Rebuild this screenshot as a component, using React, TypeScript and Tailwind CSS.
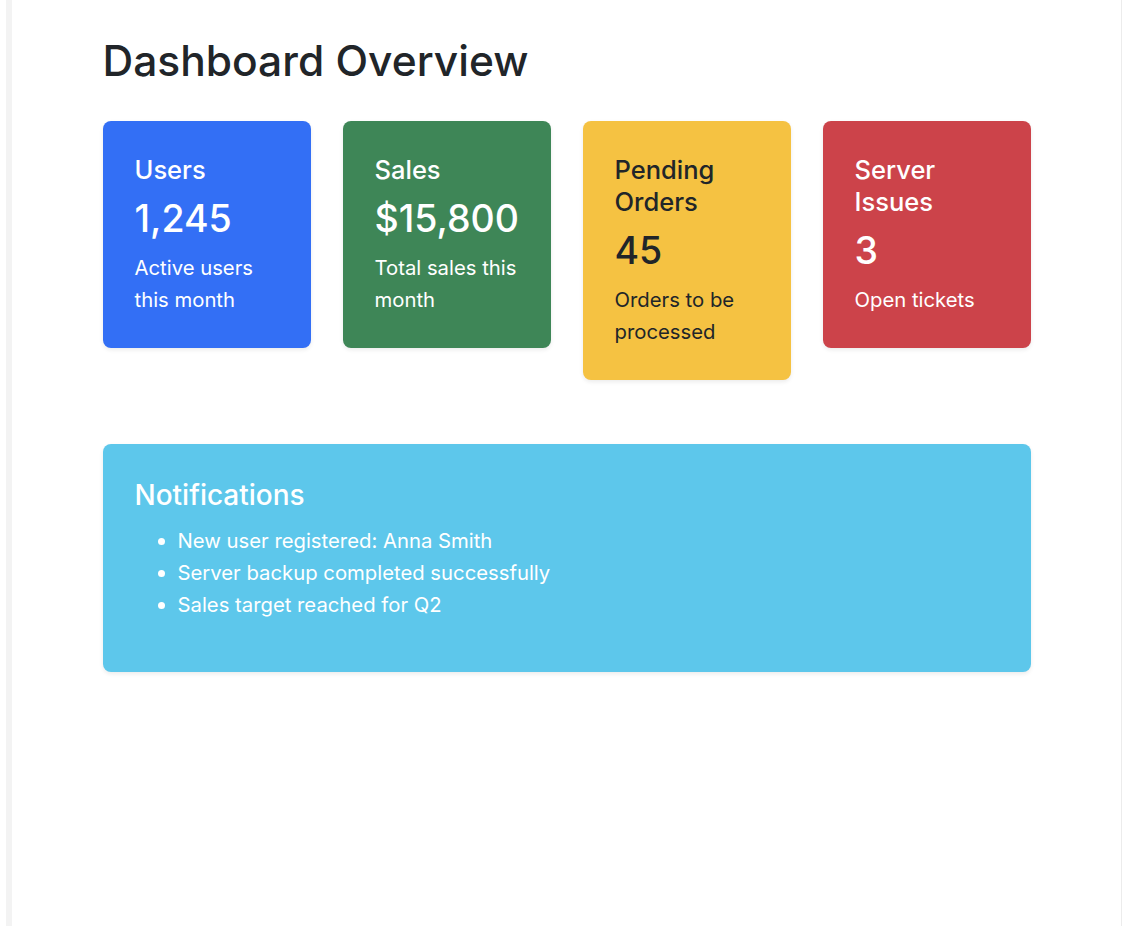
import React from "react";

type Stat = {
  title: string;
  value: string;
  text: string;
  bg: string;
  fg: string;
};

const stats: Stat[] = [
  { title: "Users", value: "1,245", text: "Active users this month", bg: "bg-[#336ff5]", fg: "text-white" },
  { title: "Sales", value: "$15,800", text: "Total sales this month", bg: "bg-[#3e8657]", fg: "text-white" },
  { title: "Pending Orders", value: "45", text: "Orders to be processed", bg: "bg-[#f5c242]", fg: "text-[#212529]" },
  { title: "Server Issues", value: "3", text: "Open tickets", bg: "bg-[#cc434a]", fg: "text-white" },
];

function StatCard({ s }: { s: Stat }) {
  return (
    <div className={`${s.bg} ${s.fg} w-[208px] rounded-lg shadow-[0_2px_4px_rgba(0,0,0,0.08)] px-8 pt-[33px] pb-8`}>
      <h4 className="text-[25.5px] leading-[32px] font-medium">{s.title}</h4>
      <div className="text-[37.5px] leading-[44px] font-medium my-[11px]">{s.value}</div>
      <p className="text-[20.3px] leading-[32px]">{s.text}</p>
    </div>
  );
}

export default function App() {
  return (
    <div className="flex min-h-[926px] bg-white font-['Inter',sans-serif] text-[#212529]">
      <div className="w-[6px] shrink-0 bg-white" />
      <div className="w-[6px] shrink-0 bg-[#f3f3f3]" />
      <main className="flex-1 border-r border-[#ececec]">
        <div className="mx-auto w-[928px] pt-[36px]">
          <h1 className="text-[42.5px] leading-[50px] font-medium mb-[35px]">Dashboard Overview</h1>
          <div className="flex items-start gap-8">
            {stats.map((s) => (
              <StatCard key={s.title} s={s} />
            ))}
          </div>
          <div className="mt-16 bg-[#5dc7eb] text-white rounded-lg shadow-[0_2px_4px_rgba(0,0,0,0.08)] px-8 pt-[34px] pb-[51px]">
            <h4 className="text-[28px] leading-[34px] font-medium mb-[13px]">Notifications</h4>
            <ul className="list-disc pl-[43px] text-[20.3px] leading-[32px]">
              <li>New user registered: Anna Smith</li>
              <li>Server backup completed successfully</li>
              <li>Sales target reached for Q2</li>
            </ul>
          </div>
        </div>
      </main>
    </div>
  );
}
